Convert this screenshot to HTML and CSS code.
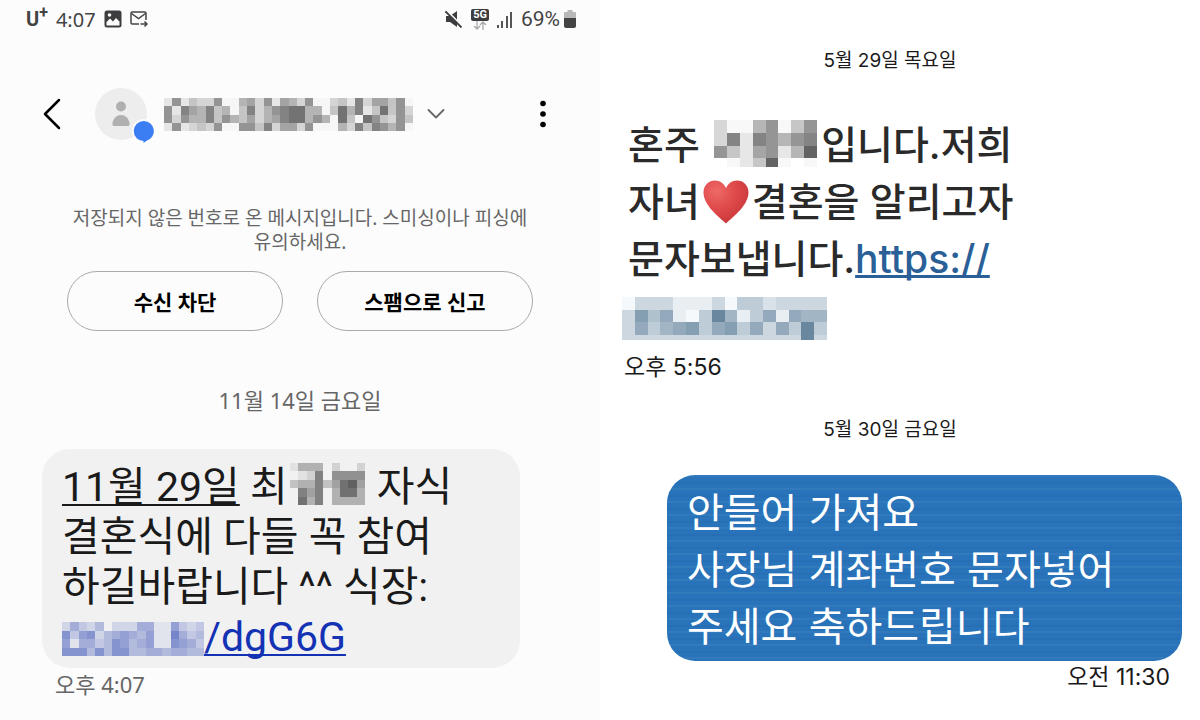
FILE: index.html
```html
<!DOCTYPE html>
<html lang="ko">
<head>
    <meta charset="UTF-8">
    <meta name="viewport" content="width=device-width, initial-scale=1.0">
    <title>문자 메시지</title>
    <link rel="stylesheet" href="styles.css">
</head>
<body>
    <div class="screens">
        <!-- Android phone -->
        <section class="phone phone-left">
            <div class="status-bar">
                <div class="status-group">
                    <span class="carrier">U<sup>+</sup></span>
                    <span>4:07</span>
                    <svg class="icon-picture" viewBox="0 0 18 18">
                        <rect x="0.5" y="0.5" width="17" height="17" rx="2.5" fill="#3d3d3f"/>
                        <path d="M2.5 15.5v-3.5l3.5-3.5 3 3 3-3.5 3.5 3.5v4z" fill="#fcfcfc"/>
                        <circle cx="5.5" cy="5" r="1.8" fill="#fcfcfc"/>
                    </svg>
                    <svg class="icon-mail" viewBox="0 0 18 16" fill="none" stroke="#444" stroke-width="1.5">
                        <path d="M9 13H2.2Q1 13 1 11.8V2.2Q1 1 2.2 1H14.8Q16 1 16 2.2V9"/>
                        <path d="M1.5 2.5L8.5 7.5L15.5 2.5M10.5 13H17M14.5 10.5L17 13L14.5 15.5"/>
                    </svg>
                </div>
                <div class="status-group">
                    <svg class="icon-mute" viewBox="0 0 18 18">
                        <path d="M1 6h4l7-5v16l-7-5H1z" fill="#3d3d3f"/>
                        <path d="M1 0L17 16" stroke="#fcfcfc" stroke-width="2"/>
                        <path d="M0.5 1.5L16.5 17.5" stroke="#3d3d3f" stroke-width="1.8"/>
                    </svg>
                    <div class="network">
                        <span class="badge-5g">5G</span>
                        <svg class="icon-arrows" viewBox="0 0 14 9" fill="none" stroke="#aaa" stroke-width="1.3">
                            <path d="M4 0v8M1 5l3 3 3-3M10 9V1M7 4l3-3 3 3"/>
                        </svg>
                    </div>
                    <svg class="icon-signal" viewBox="0 0 16 17" fill="#555">
                        <rect x="0" y="14" width="2" height="3"/>
                        <rect x="4" y="10" width="2" height="7"/>
                        <rect x="9" y="5" width="2" height="12"/>
                        <rect x="13" y="1" width="2" height="16"/>
                    </svg>
                    <div class="battery">
                        <span>69%</span>
                        <svg class="icon-battery" viewBox="0 0 12 18">
                            <path d="M3.5 0h5v2H11q1 0 1 1v6H0V3q0-1 1-1h2.5z" fill="#b8b8b8"/>
                            <path d="M0 8h12v8q0 2-2 2H2q-2 0-2-2z" fill="#444"/>
                        </svg>
                    </div>
                </div>
            </div>

            <header class="chat-header">
                <button class="icon-button back" aria-label="뒤로">
                    <svg viewBox="0 0 20 32" fill="none" stroke="#000" stroke-width="2.5" stroke-linecap="round" stroke-linejoin="round">
                        <path d="M17 2L3 16L17 30"/>
                    </svg>
                </button>
                <div class="avatar">
                    <svg viewBox="0 0 60 52">
                        <circle cx="26" cy="26" r="26" fill="#ededed"/>
                        <circle cx="26" cy="18.5" r="5" fill="#b0b0b0"/>
                        <path d="M17.5 36.5v-2q2-7.5 8.5-7.5t8.5 7.5v2q0 1.5-1.5 1.5H19q-1.5 0-1.5-1.5z" fill="#b0b0b0"/>
                        <circle cx="49" cy="43" r="12" fill="#fcfcfc"/>
                        <path d="M49 33a10 10 0 0 1 3 19.5L48.5 55V53A10 10 0 0 1 49 33z" fill="#3b7df2"/>
                    </svg>
                </div>
                <svg class="mosaic mosaic-number" viewBox="0 0 30 4" data-dark="0,0,0" data-light="246,246,246"
                     data-rows="e9ecdd9ffbad9eabd9ffdce8daac9f 9e8ab8cbfc8db9877bbfc7b8ec7c9d 9d9bb8c9bcadba877b9bf7cf79cd9c e9edcd9ff99c8daad9fffbd8c89b9f"></svg>
                <button class="icon-button expand" aria-label="펼치기">
                    <svg viewBox="0 0 18 12" fill="none" stroke="#666" stroke-width="1.8" stroke-linecap="round" stroke-linejoin="round">
                        <path d="M1.5 2L9 9.5L16.5 2"/>
                    </svg>
                </button>
                <button class="icon-button more" aria-label="더보기">
                    <svg viewBox="0 0 6 28">
                        <circle cx="3" cy="3.5" r="2.8"/>
                        <circle cx="3" cy="14" r="2.8"/>
                        <circle cx="3" cy="24.5" r="2.8"/>
                    </svg>
                </button>
            </header>

            <p class="notice">저장되지 않은 번호로 온 메시지입니다. 스미싱이나 피싱에<br>유의하세요.</p>

            <div class="actions">
                <button class="pill">수신 차단</button>
                <button class="pill">스팸으로 신고</button>
            </div>

            <p class="date">11월 14일 금요일</p>

            <div class="bubble bubble-gray">
                <a class="date-link" href="#">11월 29일</a> 최<svg class="mosaic mosaic-name" viewBox="0 0 9 5" data-dark="0,0,0" data-light="242,242,242"
                    data-rows="ebbb.d..d .ed8f9999 cbb8ca76a .8a8.b77b .7b8.bbbb"></svg> 자식<br>
                결혼식에 다들 꼭 참여<br>
                하길바랍니다 ^^ 식장:<br>
                <a class="url" href="#"><svg class="mosaic mosaic-host" viewBox="0 0 17 4" data-dark="10,40,165" data-light="240,240,242"
                    data-rows="dacdbfdddaaee9cdc 8c98dba9ab9ee7acb 9eaacb89ba9ee89ac 888b8b88bbaabaabb"></svg>/dgG6G</a>
            </div>
            <time class="time">오후 4:07</time>
        </section>

        <!-- iPhone -->
        <section class="phone phone-right">
            <p class="date">5월 29일 목요일</p>

            <div class="message">
                혼주 <svg class="mosaic mosaic-host-name" viewBox="0 0 8 3.67" data-dark="0,0,0" data-light="248,248,248"
                    data-rows="dffb9fc9 d8e89b98 9cea9eb6 .fec6f.f"></svg>입니다.저희<br>
                자녀<svg class="heart" viewBox="0 0 46 44" role="img" aria-label="하트">
                    <defs>
                        <radialGradient id="heartFill" cx="0.3" cy="0.25" r="0.8">
                            <stop offset="0" stop-color="#ee6a69"/>
                            <stop offset="0.5" stop-color="#e04a4b"/>
                            <stop offset="1" stop-color="#c9383c"/>
                        </radialGradient>
                    </defs>
                    <path d="M23 43.5C15 36 0.5 25 0.5 12.5C0.5 5 6 0.5 12 0.5C17 0.5 21 3.5 23 8C25 3.5 29 0.5 34 0.5C40 0.5 45.5 5 45.5 12.5C45.5 25 31 36 23 43.5z" fill="url(#heartFill)"/>
                </svg>결혼을 알리고자<br>
                문자보냅니다.<a class="url" href="#">https://</a><br>
                <svg class="mosaic mosaic-url" viewBox="0 0 16 3.4" data-dark="35,80,115" data-light="246,249,251"
                    data-rows="fccceeecfbbdcccc c7a8efb59eb8e899 c8b987b87b8c8b5b cccccccccccccc5c"></svg>
            </div>
            <time class="time">오후 5:56</time>

            <p class="date date-second">5월 30일 금요일</p>

            <div class="bubble bubble-blue">
                안들어 가져요<br>
                사장님 계좌번호 문자넣어<br>
                주세요 축하드립니다
            </div>
            <time class="time time-sent">오전 11:30</time>
        </section>
    </div>

    <script src="mosaic.js"></script>
</body>
</html>
```
FILE: styles.css
```css
* {
    box-sizing: border-box;
}
body {
    margin: 0;
    background: #fff;
    font-family: "Noto Sans", "Noto Sans CJK KR", sans-serif;
    color: #1a1a1a;
}
p {
    margin: 0;
}
button {
    padding: 0;
    border: none;
    background: none;
    font-family: inherit;
    cursor: pointer;
}
svg {
    display: block;
}
.screens {
    display: grid;
    grid-template-columns: 1fr 1fr;
    min-height: 100vh;
}
.phone {
    display: flex;
    flex-direction: column;
}
.date {
    text-align: center;
}

/* Left phone */
.phone-left {
    background: #fcfcfc;
    padding: 0 24px;
}
.status-bar {
    display: flex;
    justify-content: space-between;
    align-items: center;
    height: 38px;
    padding-left: 2px;
    font-size: 20px;
    color: #444;
}
.status-group {
    display: flex;
    align-items: center;
    gap: 8px;
}
.carrier {
    font-family: Roboto, sans-serif;
    font-weight: 700;
    font-size: 20px;
    line-height: 20px;
}
.carrier sup {
    font-size: 16px;
    line-height: 0;
}
.icon-picture {
    width: 18px;
    height: 18px;
}
.icon-mail {
    width: 18px;
    height: 16px;
}
.icon-mute {
    width: 18px;
    height: 18px;
}
.network {
    display: flex;
    flex-direction: column;
    align-items: center;
}
.badge-5g {
    background: #3d3d3f;
    color: #fff;
    font-family: Roboto, sans-serif;
    font-size: 11px;
    font-weight: 700;
    line-height: 12px;
    padding: 0 2px;
    border-radius: 2px;
}
.icon-arrows {
    width: 14px;
    height: 9px;
}
.icon-signal {
    width: 16px;
    height: 17px;
}
.battery {
    display: flex;
    align-items: center;
    gap: 4px;
    font-family: Roboto, sans-serif;
    font-size: 21px;
}
.icon-battery {
    width: 12px;
    height: 18px;
}
.chat-header {
    display: flex;
    align-items: center;
    margin-top: 50px;
    padding: 0 30px 0 18px;
}
.back svg {
    width: 20px;
    height: 32px;
}
.avatar {
    margin-left: 33px;
}
.avatar svg {
    width: 60px;
    height: 52px;
    overflow: visible;
}
.mosaic-number {
    width: 249px;
    height: 33px;
    margin-left: 9px;
}
.expand {
    margin-left: 14px;
}
.expand svg {
    width: 18px;
    height: 12px;
}
.more {
    margin-left: auto;
}
.more svg {
    width: 6px;
    height: 28px;
}
.notice {
    margin-top: 66px;
    text-align: center;
    font-size: 19px;
    line-height: 24px;
    color: #666;
}
.actions {
    display: flex;
    gap: 34px;
    margin-top: 17px;
    padding: 0 43px;
}
.pill {
    flex: 1;
    height: 60px;
    border: 1px solid #aaa;
    border-radius: 30px;
    font-size: 21px;
    font-weight: 700;
    color: #000;
}
.phone-left .date {
    margin-top: 53px;
    font-size: 22px;
    line-height: 32px;
    color: #666;
}
.bubble-gray {
    margin: 33px 56px 0 18px;
    padding: 13px 20px 6px;
    border-radius: 28px;
    background: #f1f1f1;
    font-family: Roboto, "Noto Sans CJK KR", sans-serif;
    font-size: 41px;
    line-height: 50px;
}
.bubble-gray a {
    text-decoration-thickness: 2px;
    text-decoration-skip-ink: none;
    text-underline-offset: 3px;
}
.date-link {
    color: inherit;
}
.bubble-gray .url {
    color: #1432b4;
}
.bubble .mosaic,
.message .mosaic,
.heart {
    display: inline-block;
}
.mosaic-name {
    width: 75px;
    height: 42px;
    margin: 0 2px;
    vertical-align: -4px;
}
.mosaic-host {
    width: 142px;
    height: 34px;
    vertical-align: -5px;
}
.phone-left .time {
    margin: 2px 31px 0;
    font-size: 22px;
    line-height: 28px;
    color: #666;
}

/* Right phone */
.phone-right {
    padding: 47px 18px 0 22px;
    font-family: Inter, "Noto Sans CJK KR", sans-serif;
}
.phone-right .date {
    padding-right: 24px;
    font-size: 19px;
    line-height: 28px;
}
.message {
    margin-top: 41px;
    padding-left: 6px;
    font-size: 39px;
    font-weight: 500;
    line-height: 57px;
    color: #2a2a2a;
}
.message .url {
    color: #2a5f98;
    text-decoration-thickness: 3px;
    text-decoration-skip-ink: none;
    text-underline-offset: 2px;
}
.message .mosaic-host-name {
    width: 103px;
    height: 47px;
    margin: 0 4px;
    vertical-align: -8px;
}
.heart {
    width: 46px;
    height: 44px;
    margin: 0 3px;
    vertical-align: -8px;
}
.message .mosaic-url {
    display: block;
    width: 205px;
    height: 43px;
    margin: 10px 0 0 -6px;
}
.phone-right .time {
    margin: 13px 2px 0;
    font-size: 23px;
    line-height: 28px;
}
.date-second {
    margin-top: 35px;
}
.bubble-blue {
    margin: 31px 0 0 45px;
    padding: 9px 20px 6px;
    border-radius: 28px;
    background:
        repeating-linear-gradient(rgba(255, 255, 255, 0.05) 0 2px, transparent 2px 7px, rgba(0, 20, 80, 0.04) 7px 9px, transparent 9px 13px),
        #2873b9;
    color: #fff;
    font-size: 40px;
    line-height: 57px;
}
.phone-right .time-sent {
    margin: 2px 12px 0;
    text-align: right;
}
```
FILE: mosaic.js
```js
// Fill every mosaic with square cells. Each hex digit is a shade, 0 = dark, f = light, "." = empty
document.querySelectorAll(".mosaic").forEach(function(svg) {
    var dark = svg.dataset.dark.split(",").map(Number);
    var light = svg.dataset.light.split(",").map(Number);

    svg.setAttribute("preserveAspectRatio", "none");
    svg.setAttribute("shape-rendering", "crispEdges");
    svg.setAttribute("aria-hidden", "true");

    svg.dataset.rows.split(" ").forEach(function(row, y) {
        row.split("").forEach(function(shade, x) {
            if (shade === ".") return;
            var level = parseInt(shade, 16) / 15;
            var color = dark.map(function(d, i) {
                return Math.round(d + (light[i] - d) * level);
            });
            var cell = document.createElementNS("http://www.w3.org/2000/svg", "rect");
            cell.setAttribute("x", x);
            cell.setAttribute("y", y);
            cell.setAttribute("width", 1);
            cell.setAttribute("height", 1);
            cell.setAttribute("fill", "rgb(" + color.join(",") + ")");
            svg.appendChild(cell);
        });
    });
});
```
